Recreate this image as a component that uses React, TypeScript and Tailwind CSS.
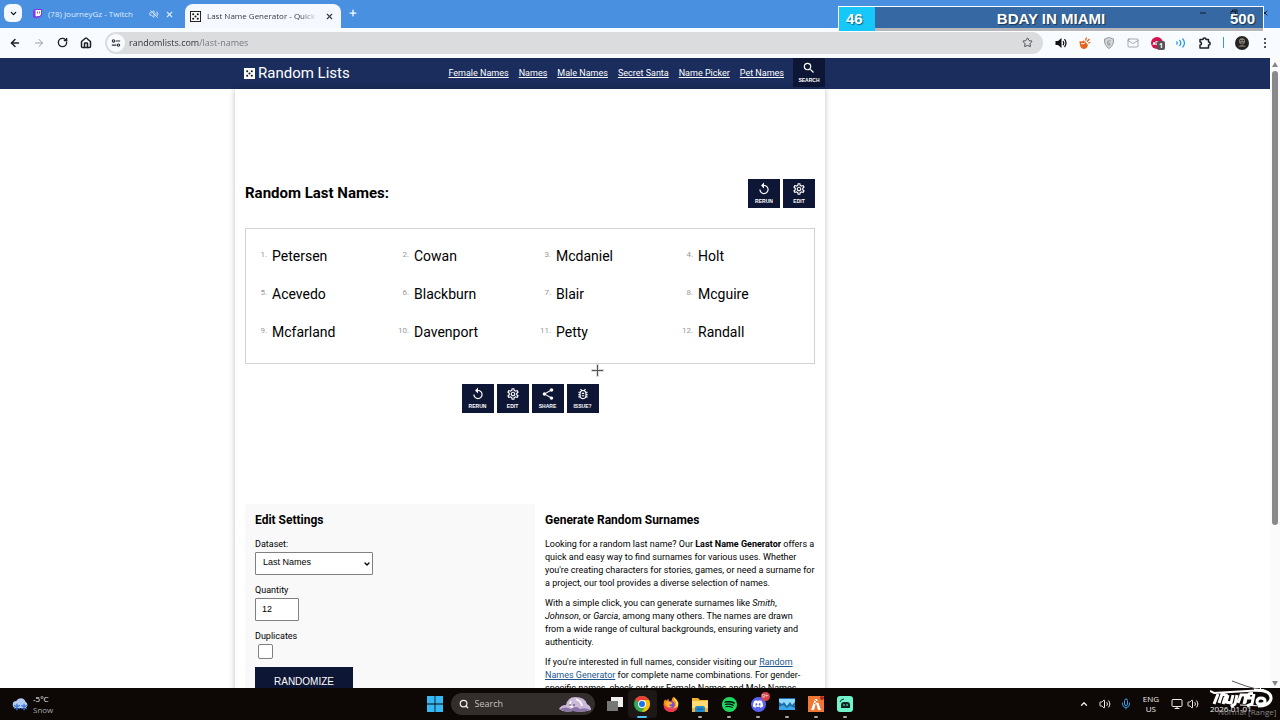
import type { ReactNode } from "react";
import { ArrowLeft, ArrowRight, ChevronDown, ChevronUp, House, Mail, Mic, Monitor, Plus, RotateCw, Search, Star, Volume2, X } from "lucide-react";
import { MdOutlineBugReport, MdOutlineSettings, MdReplay, MdSearch, MdShare } from "react-icons/md";
import { SiDiscord, SiSpotify } from "react-icons/si";

const names = ["Petersen", "Cowan", "Mcdaniel", "Holt", "Acevedo", "Blackburn", "Blair", "Mcguire", "Mcfarland", "Davenport", "Petty", "Randall"];
const links = ["Female Names", "Names", "Male Names", "Secret Santa", "Name Picker", "Pet Names"];

function Dice({ outline }: { outline: string }) {
    return (
        <svg width="11" height="11" viewBox="0 0 12 12" className="shrink-0">
            <rect width="12" height="12" fill={outline} />
            <rect x="1" y="1" width="10" height="10" fill="#f7f9fb" />
            {[[3.5, 3.5], [8.5, 3.5], [6, 6], [3.5, 8.5], [8.5, 8.5]].map(([x, y]) => (
                <circle key={`${x}-${y}`} cx={x} cy={y} r="1.1" fill="#111" />
            ))}
        </svg>
    );
}

function ToolButton({ icon, label }: { icon: ReactNode; label: string }) {
    return (
        <button className="flex h-[29px] w-8 flex-col items-center justify-center gap-[2px] bg-[#0d1634] text-white">
            {icon}
            <span className="font-['Liberation_Sans',sans-serif] text-[5px] leading-[6px] font-bold">{label}</span>
        </button>
    );
}

function TabStrip() {
    return (
        <div className="flex h-7 items-end bg-[#4a90e0] pl-1 text-[8px]">
            <button aria-label="Search tabs" className="mb-[6px] flex size-[18px] items-center justify-center rounded-md bg-[#f4f9ff]">
                <ChevronDown size={9} strokeWidth={3} />
            </button>
            <div className="flex h-7 w-[163px] items-center px-[11px] text-[#dcebfb]">
                <svg viewBox="0 0 18 20" className="mr-[6px] h-[10px] w-[9px]">
                    <path d="M3 0h15v12l-5 5H9l-3 3v-3H0V4z" fill="#8236e6" />
                    <path d="M5 2h11v9l-3 3H9l-2 2v-2H5z" fill="#fff" />
                    <path d="M9 5v4M13 5v4" stroke="#8236e6" strokeWidth="1.6" />
                </svg>
                <span className="grow whitespace-nowrap">(78) JourneyGz - Twitch</span>
                <svg viewBox="0 0 12 12" className="mr-[6px] size-[10px]" fill="none" stroke="currentColor">
                    <path d="M1 4.500h2l3-2.500v8l-3-2.500h-2z" />
                    <path d="M8 4.500q1.500 1.500 0 3M9.500 3q2.500 3 0 6M1.500 1.500l9 9" />
                </svg>
                <button aria-label="Close tab"><X size={9} strokeWidth={3} /></button>
            </div>
            <div className="flex h-6 w-[156px] items-center rounded-t-lg bg-[#f5f9ff] pr-[7px] pl-[5px] text-[#333b46]">
                <Dice outline="#111" />
                <span className="mr-[7px] ml-[6px] w-0 grow overflow-hidden whitespace-nowrap [mask-image:linear-gradient(to_right,black_85%,transparent)]">
                    Last Name Generator - Quick su
                </span>
                <button aria-label="Close tab"><X size={9} strokeWidth={3} /></button>
            </div>
            <button aria-label="New tab" className="mb-[10px] ml-[7px] text-white"><Plus size={10} strokeWidth={3} /></button>
            <div className="mr-[11px] mb-[11px] ml-auto flex gap-[23px] text-[#182235]">
                <svg width="8" height="8" viewBox="0 0 8 8" stroke="currentColor"><path d="M1 4h6" /></svg>
                <svg width="8" height="8" viewBox="0 0 8 8" stroke="currentColor" fill="none"><path d="M1 2.500h4.500V7H1zM2.500 2V1H7v4.500H6" /></svg>
                <X size={8} strokeWidth={3} />
            </div>
        </div>
    );
}

function Toolbar() {
    return (
        <div className="flex h-[30px] items-center bg-[#f8fbff] pr-[13px] pl-[9px] text-[#1d2127]">
            <div className="flex items-center gap-3">
                <button aria-label="Back"><ArrowLeft size={12} strokeWidth={3} /></button>
                <button aria-label="Forward" className="text-[#9a9fa6]"><ArrowRight size={12} strokeWidth={2} /></button>
                <button aria-label="Reload"><RotateCw size={11} strokeWidth={3} /></button>
                <button aria-label="Home">
                    <House size={12} strokeWidth={3} />
                </button>
            </div>
            <div className="mr-3 ml-[13px] flex h-[22px] grow items-center rounded-full bg-[#dbdcde] pr-[10px] pl-[2px]">
                <span className="mr-1 flex size-[18px] items-center justify-center rounded-full bg-[#f8fbff]">
                    <svg viewBox="0 0 12 12" className="size-[10px]" fill="none" stroke="#2b2f35" strokeWidth="1.300">
                        <circle cx="3" cy="3.500" r="1.400" /><path d="M5.500 3.500H11M1 8.500h5.500" /><circle cx="9" cy="8.500" r="1.400" />
                    </svg>
                </span>
                <input
                    aria-label="Address"
                    defaultValue="randomlists.com/last-names"
                    className="w-0 grow bg-[linear-gradient(to_right,#2c3138_70px,#70757b_70px)] bg-clip-text text-[9px] text-transparent"
                />
                <button aria-label="Bookmark"><Star size={11} strokeWidth={2} className="text-[#42464c]" /></button>
            </div>
            <div className="flex items-center gap-3">
                <svg viewBox="0 0 24 24" className="size-3" fill="none" stroke="#111" strokeWidth="2.500">
                    <path d="M1 8h5l7-6v20l-7-6H1z" fill="#111" stroke="none" /><path d="M16 8q3 4 0 8M19 4q6 8 0 16" />
                </svg>
                <svg viewBox="0 0 24 24" className="size-3">
                    <path d="M1 8q4 2 9-1l8 9q-2 8-9 8-8-1-8-16z" fill="#e8601a" />
                    <path d="M4 13q4 2 8-1" stroke="#fff" strokeWidth="2" fill="none" /><path d="M13 7l2-6M16 9l5-5M18 12l5-1" stroke="#e8601a" strokeWidth="2.500" />
                </svg>
                <svg viewBox="0 0 24 24" className="size-3" fill="none" stroke="#94989d" strokeWidth="2">
                    <path d="M12 1l9 3q1 13-9 19Q2 17 3 4z" fill="#d5d8db" /><path d="M15 8q-6-3-6 5 1 5 5 3 2-4-4-4" />
                </svg>
                <Mail size={12} strokeWidth={1} className="text-[#55595f]" />
                <span className="relative flex size-3 items-center justify-center rounded-full bg-[#d6114b]">
                    <svg viewBox="0 0 10 4" className="h-1 w-[10px]" fill="none" stroke="#fff"><path d="M1 4l1-3 1 3M4 0v4h2V0zM7 4V0h2v2H7" /></svg>
                    <span className="absolute top-1 left-[6px] rounded-[2px] bg-[#555] px-[2px] text-[7px] leading-[9px] font-bold text-white">1</span>
                </span>
                <svg viewBox="0 0 24 24" className="size-3" fill="none" stroke="#1e9be6" strokeWidth="2.500">
                    <path d="M3 9q3 3 0 6M9 6q5 6 0 12M15 3q8 9 0 18" />
                </svg>
                <svg viewBox="0 0 12 12" className="size-3" fill="none" stroke="#1d2127" strokeWidth="1.500">
                    <path d="M1 2.500h3Q4 1 5.500 1T7 2.500h2.500V5Q11.200 5 11.200 6.500T9.500 8v3H1V8q1.500 0 1.500-1.500T1 5z" strokeLinejoin="round" />
                </svg>
                <span className="h-[11px] w-px bg-[#4a90e0]" />
                <svg viewBox="0 0 24 24" className="-ml-px size-[14px]">
                    <circle cx="12" cy="12" r="12" fill="#252423" /><circle cx="12" cy="9" r="5" fill="#91847a" />
                    <path d="M5 19q7-9 14 0" fill="#68615c" /><path d="M9 8h2m2 0h2M10 12h4" stroke="#181818" strokeWidth="2" />
                </svg>
                <svg viewBox="0 0 4 12" className="ml-[2px] h-3 w-1" fill="#202124"><circle cx="2" cy="2" r="1" /><circle cx="2" cy="6" r="1" /><circle cx="2" cy="10" r="1" /></svg>
            </div>
        </div>
    );
}

function Article() {
    return (
        <section className="w-[280px] pt-2 pl-[10px] text-[9px] leading-[13px]">
            <h2 className="mb-[10px] text-[12px] leading-4 font-bold">Generate Random Surnames</h2>
            <p className="mb-[7px]">
                Looking for a random last name? Our <b>Last Name Generator</b> offers a quick and easy way to find surnames for various uses. Whether
                you're creating characters for stories, games, or need a surname for a project, our tool provides a diverse selection of names.
            </p>
            <p className="mb-[7px]">
                With a simple click, you can generate surnames like <i>Smith</i>,<br />
                <i>Johnson</i>, or <i>Garcia</i>, among many others. The names are drawn<br />
                from a wide range of cultural backgrounds, ensuring variety and authenticity.
            </p>
            <p>
                If you're interested in full names, consider visiting our <a href="#names" className="text-[#1d568c] underline">Random Names Generator</a> for
                complete name combinations. For gender-specific names, check out our <a href="#female" className="underline">Female Names</a> and{" "}
                <a href="#male" className="underline">Male Names</a>.
            </p>
        </section>
    );
}

function Settings() {
    const field = "mb-[7px] h-[23px] rounded-[1px] border border-[#808080] bg-white font-['Liberation_Sans',sans-serif] text-[9px]";
    return (
        <form className="flex grow flex-col items-start bg-[#f9f9f9] px-[10px] pt-2 text-[9px]" onSubmit={(e) => e.preventDefault()}>
            <h2 className="mb-2 text-[12px] leading-4 font-bold">Edit Settings</h2>
            <label htmlFor="dataset" className="leading-4">Dataset:</label>
            <div className="relative">
                <select id="dataset" className={`${field} w-[118px] appearance-none pl-[7px]`}>
                    <option>Last Names</option>
                </select>
                <ChevronDown size={8} strokeWidth={4} className="pointer-events-none absolute top-2 right-[2px]" />
            </div>
            <label htmlFor="quantity" className="leading-4">Quantity</label>
            <input id="quantity" defaultValue="12" className={`${field} w-11 px-[6px]`} />
            <label htmlFor="duplicates" className="leading-4">Duplicates</label>
            <input id="duplicates" type="checkbox" className="mb-2 ml-[3px] size-[15px] appearance-none rounded-[2px] border border-[#808080] bg-white" />
            <button className="h-[29px] shrink-0 bg-[#0d1634] px-[19px] font-['Liberation_Sans',sans-serif] text-[10px] text-white">RANDOMIZE</button>
        </form>
    );
}

function Page() {
    return (
        <main className="flex min-h-0 grow overflow-hidden bg-white font-[Roboto,sans-serif] text-black">
            <div className="grow overflow-hidden">
                <header className="flex h-[31px] justify-center bg-[#1b2d5d] pr-[210px] text-white">
                    <nav className="flex w-[590px] pl-[9px] text-[9px]">
                        <a href="#home" className="mr-auto flex items-center gap-[3px] text-[15px]"><Dice outline="#fff" />Random Lists</a>
                        <div className="mr-[9px] flex items-center gap-[10px] pt-px">
                            {links.map((link) => (
                                <a key={link} href={`#${link}`} className="underline">{link}</a>
                            ))}
                        </div>
                        <ToolButton icon={<MdSearch size={14} />} label="SEARCH" />
                    </nav>
                </header>
                <div className="flex justify-center pr-[210px]">
                    <div className="w-[590px] px-[10px] pt-[90px] shadow-[0_0_6px_rgba(0,0,0,0.25)]">
                        <div className="mb-5 flex items-center gap-[3px]">
                            <h1 className="mr-auto text-[15px] font-bold">Random Last Names:</h1>
                            <ToolButton icon={<MdReplay size={14} />} label="RERUN" />
                            <ToolButton icon={<MdOutlineSettings size={14} />} label="EDIT" />
                        </div>
                        <ol className="grid grid-cols-4 border border-[#d3d3d3] pt-[9px] pb-[11px]">
                            {names.map((name, index) => (
                                <li key={name} className="flex h-[38px] items-center gap-[5px] text-[14px]">
                                    <span className="w-[21px] pb-1 text-right text-[8px] text-[#999]">{index + 1}.</span>
                                    {name}
                                </li>
                            ))}
                        </ol>
                        <div className="relative mt-5 mb-[91px] flex justify-center gap-[3px]">
                            <ToolButton icon={<MdReplay size={14} />} label="RERUN" />
                            <ToolButton icon={<MdOutlineSettings size={14} />} label="EDIT" />
                            <ToolButton icon={<MdShare size={14} />} label="SHARE" />
                            <ToolButton icon={<MdOutlineBugReport size={14} />} label="ISSUE?" />
                            <svg width="13" height="13" viewBox="0 0 13 13" className="absolute -top-5 left-[346px]" stroke="#555">
                                <path d="M6.500 0v13M0 6.500h13" stroke="#ddd" strokeWidth="3" />
                                <path d="M6.500 1v11M1 6.500h11" />
                            </svg>
                        </div>
                        <div className="flex">
                            <Settings />
                            <Article />
                        </div>
                    </div>
                </div>
            </div>
            <div className="flex w-[10px] shrink-0 flex-col items-center gap-1 bg-[#fbfbfb] pt-1 pb-[2px]">
                <svg width="6" height="5" viewBox="0 0 6 5" fill="#858585"><path d="M3 0l3 5H0z" /></svg>
                <div className="min-h-0 w-[6px] grow"><div className="h-3/4 rounded-full bg-[#8a8a8a]" /></div>
                <svg width="6" height="5" viewBox="0 0 6 5" fill="#858585"><path d="M3 5l3-5H0z" /></svg>
            </div>
        </main>
    );
}

function Chrome() {
    return (
        <svg viewBox="0 0 24 24" className="size-4">
            <circle cx="12" cy="12" r="12" fill="#34a853" />
            <path d="M12 12L1.600 6A12 12 0 0 1 22.400 6z" fill="#ea4335" />
            <path d="M12 6h10.400A12 12 0 0 1 12 24l5-9z" fill="#fbbc05" />
            <circle cx="12" cy="12" r="6" fill="#fff" /><circle cx="12" cy="12" r="4.500" fill="#1a73e8" />
        </svg>
    );
}

function Firefox() {
    return (
        <svg viewBox="0 0 24 24" className="size-4">
            <path d="M3 5l2 2 3-3 1 4 4-1q0-4 3-6 1 4 4 6 4 5 2 10-3 7-10 7Q1 22 1 13 1 8 3 5z" fill="#ff8a16" />
            <path d="M1 12q0 12 12 12 8-1 10-9-5 5-10 4Q4 18 1 12z" fill="#f53354" />
            <path d="M16 1q0 5 3 8 2 6-3 9 8-1 7-8-2-5-7-9z" fill="#ffdf38" />
            <circle cx="12" cy="13" r="5.500" fill="#8148dc" /><path d="M5 8l6 1q3 1 3 3l-5 1q2 4 6 2-7 6-10-2z" fill="#ffb62b" />
        </svg>
    );
}

function AppIcon({ label, children, running = true }: { label: string; children: ReactNode; running?: boolean }) {
    return (
        <button aria-label={label} className="relative flex h-7 w-[29px] items-center justify-center">
            {children}
            {running && <span className="absolute bottom-0 h-[2px] w-1 rounded-full bg-[#aaa]" />}
        </button>
    );
}

function Taskbar() {
    return (
        <footer className="grid h-8 shrink-0 grid-cols-[1fr_auto_1fr] items-center bg-[#0d0705] text-[8px] text-[#eee]">
            <div className="flex items-center gap-1 pl-3">
                <svg viewBox="0 0 24 24" className="size-[17px]">
                    <path d="M6 17a5 5 0 0 1 0-10 7 7 0 0 1 13 1 5 5 0 0 1 0 9z" fill="#b3cbf0" />
                    <path d="M7 11v9M3 13l8 5M11 13l-8 5M17 11v9M13 13l8 5M21 13l-8 5" stroke="#3678d9" strokeWidth="1.800" />
                </svg>
                <div className="leading-[11px]"><p>-5°C</p><p className="text-[#aaa]">Snow</p></div>
            </div>
            <div className="flex items-center pl-[6px]">
                <button aria-label="Start" className="mr-2">
                    <svg viewBox="0 0 16 16" className="size-4"><path d="M0 0h7.600v7.600H0zM8.400 0H16v7.600H8.400zM0 8.400h7.600V16H0zM8.400 8.400H16V16H8.400z" fill="#35b8f4" /></svg>
                </button>
                <div className="mr-3 flex h-[22px] w-36 items-center gap-[6px] rounded-full bg-[#332d2b] pr-1 pl-2">
                    <Search size={10} strokeWidth={3} />
                    <input aria-label="Search" placeholder="Search" className="w-0 grow bg-transparent text-[9px] placeholder:text-[#c4c0be]" />
                    <svg viewBox="0 0 32 16" className="h-4 w-8">
                        <path d="M0 13q2-4 7-4 2-8 9-8 10 0 12 7 4 2 4 6-8 3-18 1-9 2-14-2z" fill="#ccb9d9" />
                        <path d="M1 13q6-3 11 0 5-4 9 0 6-2 10 1-8 3-17 1-8 2-13-2z" fill="#8974a3" />
                        <path d="M12 5q-3 6 2 6m3-8q6 3 6 7" fill="none" stroke="#fff" strokeWidth="1.500" />
                        <circle cx="11" cy="9" r=".8" fill="#332b40" /><circle cx="15" cy="9" r=".8" fill="#332b40" />
                    </svg>
                </div>
                <svg viewBox="0 0 16 14" className="mr-[5px] h-[14px] w-4"><path d="M4 0h12v10H4z" fill="#eee" /><path d="M0 4h11v10H0z" fill="#777" /></svg>
                <button aria-label="Chrome" className="relative flex h-7 w-[29px] items-center justify-center rounded bg-[#1d1715]">
                    <Chrome />
                    <span className="absolute bottom-0 h-[2px] w-[10px] rounded-full bg-[#4cc2ff]" />
                </button>
                <AppIcon label="Firefox" running={false}><Firefox /></AppIcon>
                <AppIcon label="Files">
                    <svg viewBox="0 0 16 15" className="h-[15px] w-4"><path d="M0 1h6l2 2h8v12H0z" fill="#f0b52e" /><path d="M0 4h16v7H0z" fill="#ffdc73" /><path d="M3 15v-4q0-2 2-2h6q2 0 2 2v4z" fill="#218bd0" /><path d="M5 12h6" stroke="#12598d" /></svg>
                </AppIcon>
                <AppIcon label="Spotify"><SiSpotify size={15} color="#1ed760" /></AppIcon>
                <AppIcon label="Discord">
                    <span className="flex size-[15px] items-center justify-center rounded-full bg-[#5865f2]"><SiDiscord size={10} color="#fff" /></span>
                    <span className="absolute top-[2px] right-[3px] rounded-full bg-[#d8434d] px-[1px] text-[6px] leading-[9px]">9+</span>
                </AppIcon>
                <AppIcon label="Monitor">
                    <svg viewBox="0 0 16 12" className="h-3 w-4"><rect width="16" height="12" fill="#1e6ca7" /><path d="M0 1h16v3l-3 3-2-3-3 4-3-4-2 2-3-2z" fill="#8fdaff" /><path d="M0 9l4-2 4 3 3-2 5 2v2H0z" fill="#38a8e9" /></svg>
                </AppIcon>
                <AppIcon label="FiveM">
                    <svg viewBox="0 0 16 16" className="size-4"><rect width="16" height="16" fill="#f07835" /><path d="M3 14L7 3h2l4 11h-3L8 7l-2 7z" fill="#fff" /><path d="M6 8l4-3M7 4l3 3" stroke="#f07835" /><circle cx="14" cy="2" r="2" fill="#a8281f" /></svg>
                </AppIcon>
                <AppIcon label="Streamlabs">
                    <svg viewBox="0 0 16 16" className="size-4"><rect width="16" height="16" rx="3" fill="#71f5cd" /><path d="M4 12V9q0-3 3-3h3q3 0 3 3v3z" fill="#10251f" /><path d="M7 8v2M10 8v2" stroke="#71f5cd" /><path d="M3 6q1-3 4-3" fill="none" stroke="#10251f" /></svg>
                </AppIcon>
            </div>
            <div className="flex items-center justify-end">
                <ChevronUp size={10} strokeWidth={3} className="mr-[10px]" />
                <Volume2 size={12} strokeWidth={2} />
                <Mic size={12} strokeWidth={2} className="mr-[5px] ml-[9px] text-[#399be0]" />
                <div className="mx-[6px] text-center leading-[10px]"><p>ENG</p><p>US</p></div>
                <Monitor size={12} strokeWidth={2} className="mr-1 ml-[6px]" />
                <Volume2 size={12} strokeWidth={2} />
                <div className="relative ml-[11px] h-8 w-[70px]">
                    <p className="absolute top-4 left-0 leading-[10px]">2026-01-01</p>
                    <p className="absolute top-[19px] left-2 leading-[10px] whitespace-nowrap text-[#aaa]/80">Normal [Range]</p>
                    <svg viewBox="0 0 66 34" className="absolute -top-2 left-0 h-[34px] w-[66px]" fill="none" stroke="#fff">
                        <path d="M22 1q15 6 28 9" stroke="#555" />
                        <path d="M0 11l4 2 50-3" strokeWidth="2" />
                        <path d="M4 24l4-10M9 23l3-9 4 1-3 9M18 15l-2 7 5 1 2-8M27 15l-2 9-4 3M28 23l3-8 5 0-2 9M37 14l-2 9M43 13l-4 1-1 4 5 0 1-4-2 10-5 2" strokeWidth="3" />
                        <path d="M44 10q18 0 17 9-2 7-13 7M47 22q0-4 4-4t4 3-4 3-4-2" strokeWidth="3" />
                        <path d="M52 6l-3 5 10 1M30 25l22 1" strokeWidth="1" />
                    </svg>
                </div>
            </div>
        </footer>
    );
}

export default function App() {
    return (
        <div className="relative flex h-screen flex-col overflow-hidden font-['Open_Sans',sans-serif]">
            <TabStrip />
            <Toolbar />
            <Page />
            <Taskbar />
            {/* stream goal bar */}
            <div className="absolute top-[6px] right-4 flex h-[26px] w-[426px] items-center border border-white bg-black/27 font-['Liberation_Sans',sans-serif] text-[15px] font-bold text-white [text-shadow:1px_1px_1px_rgba(0,0,0,0.5)]">
                <span className="flex h-full w-9 items-center bg-[#16c8fa] pl-[7px]">46</span>
                <span className="grow text-center">BDAY IN MIAMI</span>
                <span className="w-9 pr-2 text-right">500</span>
            </div>
        </div>
    );
}
